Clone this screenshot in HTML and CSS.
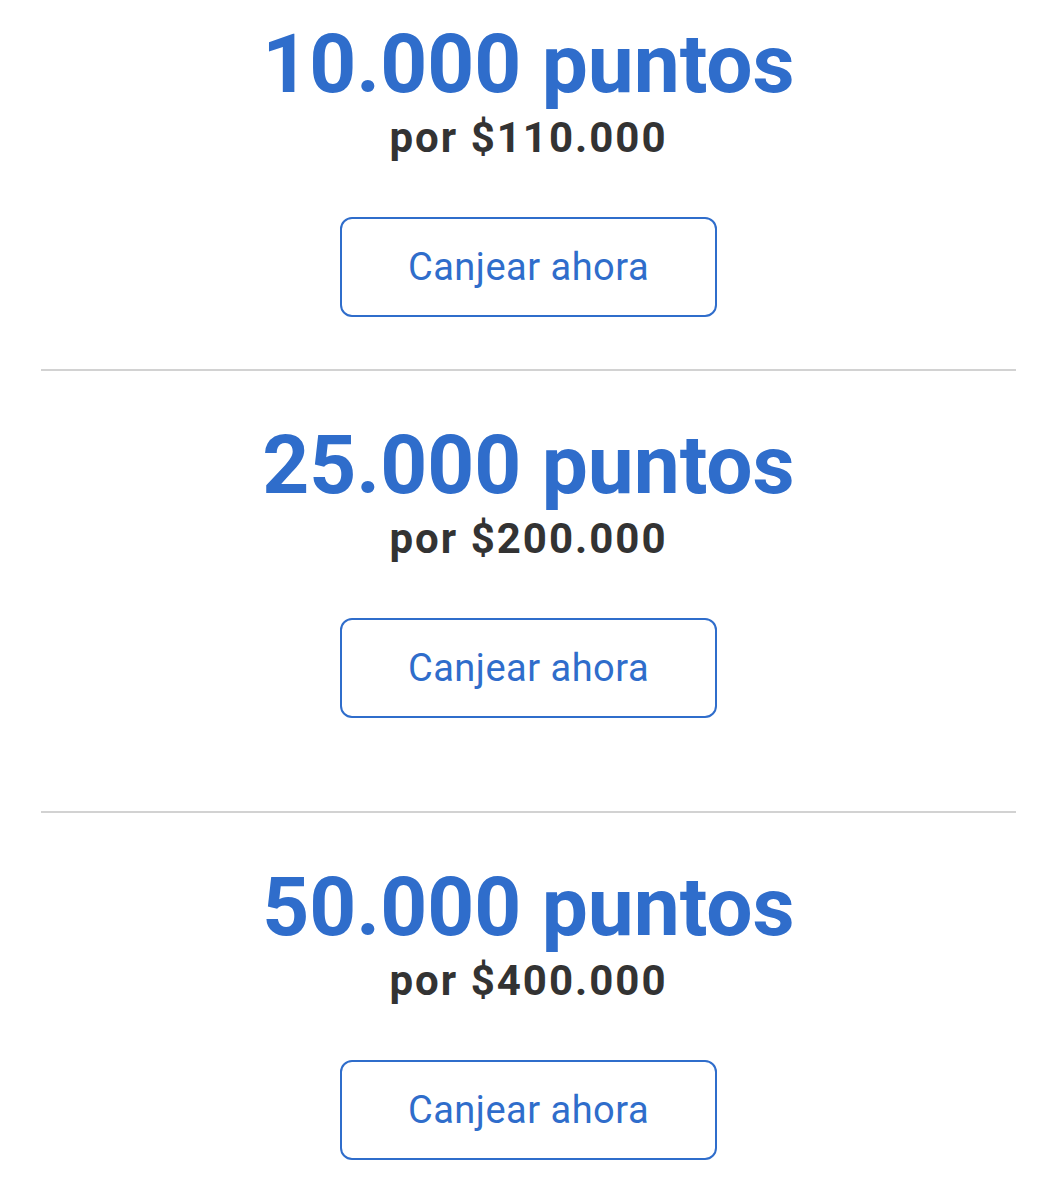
FILE: index.html
```html
<!DOCTYPE html>
<html>
<head lang="es">
    <meta charset="UTF-8">
    <meta name="viewport" content="width=device-width, initial-scale=1.0"/>
    <title>Canjear puntos</title>
    <link rel="stylesheet" href="styles.css">
</head>
<body>
<div class="offers">
    <div class="offer offer-first">
        <h2 class="offer-points">10.000 puntos</h2>
        <div class="offer-price">por $110.000</div>
        <button class="offer-btn">Canjear ahora</button>
    </div>
    <div class="offer offer-tall">
        <h2 class="offer-points">25.000 puntos</h2>
        <div class="offer-price">por $200.000</div>
        <button class="offer-btn">Canjear ahora</button>
    </div>
    <div class="offer">
        <h2 class="offer-points">50.000 puntos</h2>
        <div class="offer-price">por $400.000</div>
        <button class="offer-btn">Canjear ahora</button>
    </div>
</div>
</body>
</html>
```

FILE: styles.css
```css
* {
    margin: 0;
    padding: 0;
    box-sizing: border-box;
}
:root {
    --blue: #2f6dcb;
    --text: #333333;
    --line: #d2d2d2;
}
body {
    background: #fff;
    font-family: Roboto, "Liberation Sans", Arial, sans-serif;
    color: var(--text);
}
.offers {
    padding: 0 35px 0 41px;
}
.offer {
    display: flex;
    flex-direction: column;
    align-items: center;
    text-align: center;
    padding: 46px 0 52px;
    border-bottom: 2px solid var(--line);
}
.offer:last-child {
    border-bottom: 0;
}
.offer-first {
    padding-top: 16px;
}
.offer-tall {
    padding-bottom: 93px;
}
.offer-points {
    font-size: 82px;
    line-height: 96px;
    font-weight: 700;
    color: var(--blue);
}
.offer-price {
    margin-top: 2px;
    font-size: 42px;
    line-height: 48px;
    font-weight: 700;
    letter-spacing: 2px;
    color: var(--text);
}
.offer-btn {
    margin-top: 55px;
    width: 377px;
    height: 100px;
    border: 2px solid var(--blue);
    border-radius: 12px;
    background: #fff;
    font-family: inherit;
    font-size: 38px;
    font-weight: 400;
    letter-spacing: 0.5px;
    color: var(--blue);
    cursor: pointer;
}
```
